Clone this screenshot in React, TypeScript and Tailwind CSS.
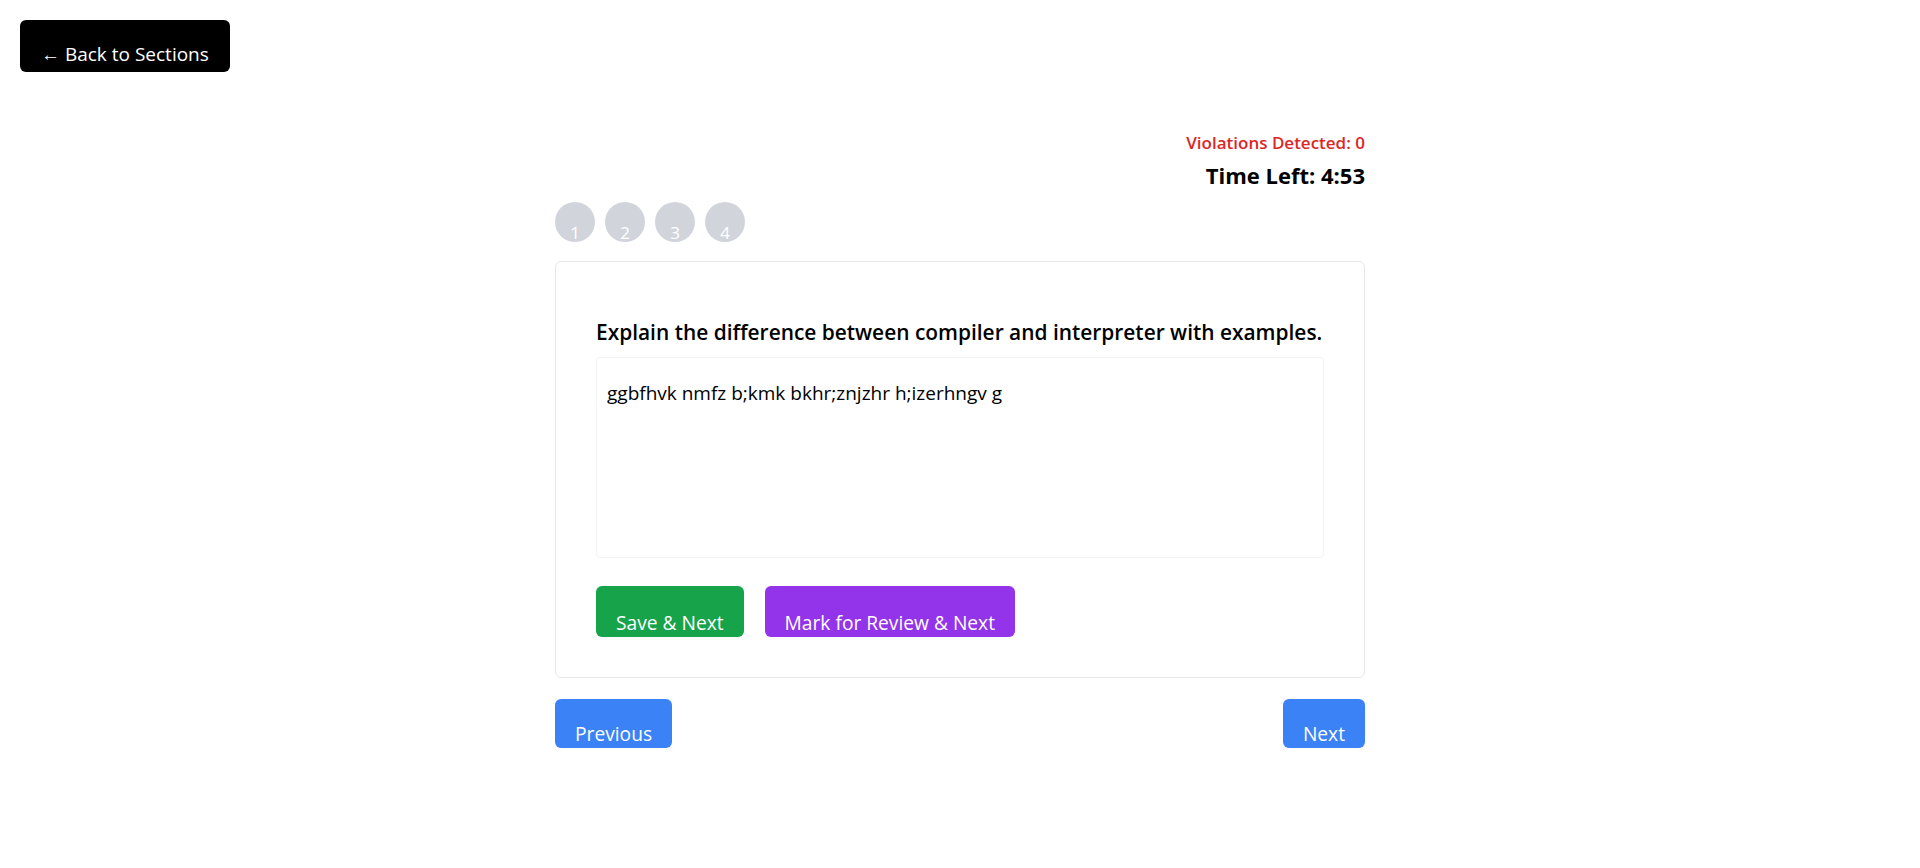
import { useState } from "react";

export default function App() {
  const [answer, setAnswer] = useState("ggbfhvk nmfz b;kmk bkhr;znjzhr h;izerhngv g");
  const questions = [1, 2, 3, 4];

  return (
    <div className="min-h-screen bg-white p-5 font-['Open_Sans',sans-serif] text-black">
      <button className="flex h-[52px] items-end rounded-md bg-black px-[21px] pb-[4px] text-[19px] leading-[1.4] text-white">
        ← Back to Sections
      </button>

      <div className="mx-auto mt-[59px] flex w-[810px] flex-col">
        <div className="flex flex-col items-end">
          <span className="text-[17px] leading-6 font-semibold text-[#dc2626]">
            Violations Detected: 0
          </span>
          <span className="mt-[6px] text-[22px] leading-7 font-bold">
            Time Left: 4:53
          </span>
        </div>

        <div className="mt-[13px] flex gap-[10px]">
          {questions.map((q) => (
            <div
              key={q}
              className="flex h-10 w-10 items-end justify-center rounded-full bg-[#d1d5db] text-[17px] leading-[18px] text-white"
            >
              {q}
            </div>
          ))}
        </div>

        <div className="mt-[19px] rounded-md border border-[#e5e7eb] px-10 pt-[56px] pb-10">
          <h2 className="whitespace-nowrap text-[20.9px] leading-7 font-semibold">
            Explain the difference between compiler and interpreter with examples.
          </h2>
          <textarea
            value={answer}
            onChange={(e) => setAnswer(e.target.value)}
            className="mt-[11px] block h-[201px] w-full resize-none rounded-sm border border-[#f3f4f6] px-[10px] pt-[23px] text-[19px] leading-6 outline-none"
          />
          <div className="mt-7 flex gap-[21px]">
            <button className="flex h-[51px] items-end rounded-md bg-[#16a34a] px-5 text-[19.2px] leading-7 text-white">
              Save &amp; Next
            </button>
            <button className="flex h-[51px] items-end rounded-md bg-[#9333ea] px-5 text-[19.2px] leading-7 text-white">
              Mark for Review &amp; Next
            </button>
          </div>
        </div>

        <div className="mt-[21px] flex justify-between">
          <button className="flex h-[49px] items-end rounded-md bg-[#3b82f6] px-5 text-[19.2px] leading-7 text-white">
            Previous
          </button>
          <button className="flex h-[49px] items-end rounded-md bg-[#3b82f6] px-5 text-[19.2px] leading-7 text-white">
            Next
          </button>
        </div>
      </div>
    </div>
  );
}
